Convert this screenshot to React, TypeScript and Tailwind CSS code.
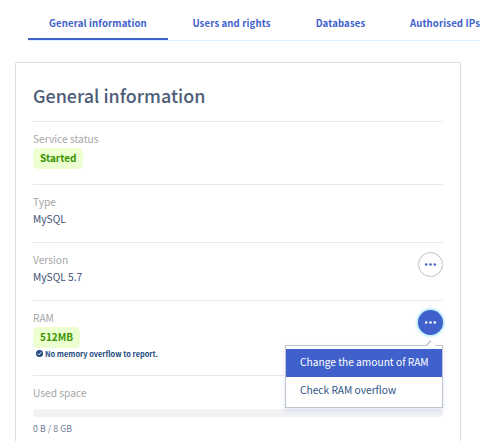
import React from "react";

const tabs = [
  { label: "General information", box: "w-[140px]", active: true },
  { label: "Users and rights", box: "w-[127px]" },
  { label: "Databases", box: "w-[91px]" },
  { label: "Authorised IPs", box: "w-[118px]" },
];

function Dots({ color }: { color: string }) {
  return (
    <svg width="13" height="3" viewBox="0 0 13 3" fill={color}>
      <circle cx="2.2" cy="1.5" r="1.25" />
      <circle cx="6.5" cy="1.5" r="1.25" />
      <circle cx="10.8" cy="1.5" r="1.25" />
    </svg>
  );
}

function Label({ children }: { children: React.ReactNode }) {
  return <div className="mb-px text-[10.2px] leading-4 text-[#a6a6a6]">{children}</div>;
}

function Value({ children }: { children: React.ReactNode }) {
  return <div className="text-[10.2px] leading-4">{children}</div>;
}

function Badge({ children }: { children: React.ReactNode }) {
  return (
    <span className="flex h-[21px] w-fit items-center rounded-[5px] bg-[#ebffd1] px-[7px] pb-px text-[10px] font-bold leading-none text-[#3a9400]">
      {children}
    </span>
  );
}

function Menu() {
  return (
    <div className="absolute right-0 top-[44px] z-10 h-[63px] w-[158px] border border-[#bdc1c8] bg-white pt-[3px] text-[10.2px] shadow-[0_3px_5px_rgba(64,97,203,0.14)]">
      <svg className="absolute right-[5px] top-[-6px]" width="12" height="7" viewBox="0 0 12 7">
        <path d="M1 6 6 1l5 5v1H1Z" fill="#fff" />
        <path d="M.8 5.9 6 .7" fill="none" stroke="#bdc1c8" strokeWidth="1.4" />
        <path d="M6 .7 11.2 5.9" fill="none" stroke="#e8eaed" strokeWidth=".6" />
      </svg>
      <div className="flex h-7 items-center whitespace-nowrap bg-[#4061cb] pb-0.5 pl-[14px] text-white">
        Change the amount of RAM
      </div>
      <div className="flex h-7 items-center whitespace-nowrap pb-0.5 pl-[14px] text-[#2f5485]">Check RAM overflow</div>
    </div>
  );
}

export default function App() {
  return (
    <div className="h-[441px] w-[480px] overflow-hidden bg-white font-['Noto_Sans_CJK_SC','Noto_Sans',sans-serif] text-[#3d5073]">
      <nav className="ml-7 flex h-[41px] whitespace-nowrap border-b border-[#def2ff] text-[9.6px] font-bold tracking-[0.12px] text-[#4061cb]">
        {tabs.map((tab) => (
          <div
            key={tab.label}
            className={`${tab.box} flex h-10 shrink-0 justify-center pt-[15px] leading-4 ${
              tab.active ? "border-b-2 border-[#4061cb]" : ""
            }`}
          >
            {tab.label}
          </div>
        ))}
      </nav>
      <main className="ml-[15px] mt-[21px] h-[400px] w-[446px] rounded-[2px] border border-[#dcdde1] px-[17px]">
        <h1 className="h-[58px] pt-[18px] text-[17.9px] font-medium leading-7 text-[#4d5c78]">General information</h1>
        <section className="h-[63px] border-t border-[#e9e9eb] pt-[9px]">
          <Label>Service status</Label>
          <Badge>Started</Badge>
        </section>
        <section className="h-[58px] border-t border-[#e9e9eb] pt-[9px]">
          <Label>Type</Label>
          <Value>MySQL</Value>
        </section>
        <section className="flex h-[58px] justify-between border-t border-[#e9e9eb]">
          <div className="pt-[9px]">
            <Label>Version</Label>
            <Value>MySQL 5.7</Value>
          </div>
          <button className="mt-[9px] flex h-[25px] w-[25px] items-center justify-center rounded-full border border-[#bebebe]">
            <Dots color="#4061cb" />
          </button>
        </section>
        <section className="relative flex h-[75px] justify-between border-t border-[#e9e9eb]">
          <div className="pt-[9px]">
            <Label>RAM</Label>
            <Badge>512MB</Badge>
            <div className="ml-[3px] flex items-center gap-[2px] whitespace-nowrap text-[7.4px] font-bold leading-[11px] text-[#224a7f]">
              <svg width="7" height="7" viewBox="0 0 14 14">
                <circle cx="7" cy="7" r="7" fill="#224a7f" />
                <path d="m3.5 7 2.5 2.6 4.7-5" fill="none" stroke="#fff" strokeWidth="2" />
              </svg>
              No memory overflow to report.
            </div>
          </div>
          <button className="mt-[9px] flex h-[25px] w-[25px] items-center justify-center rounded-full bg-[#4061cb] shadow-[0_0_3px_1px_#91dcf5]">
            <Dots color="#fff" />
          </button>
          <Menu />
        </section>
        <section className="border-t border-[#e9e9eb] pt-[9px]">
          <Label>Used space</Label>
          <div className="mt-[8px] h-2 rounded-full bg-[#f2f2f2]" />
          <div className="mt-[4px] text-[8.7px] leading-4 tracking-[0.08px] text-[#717d95]">0 B / 8 GB</div>
        </section>
      </main>
    </div>
  );
}
